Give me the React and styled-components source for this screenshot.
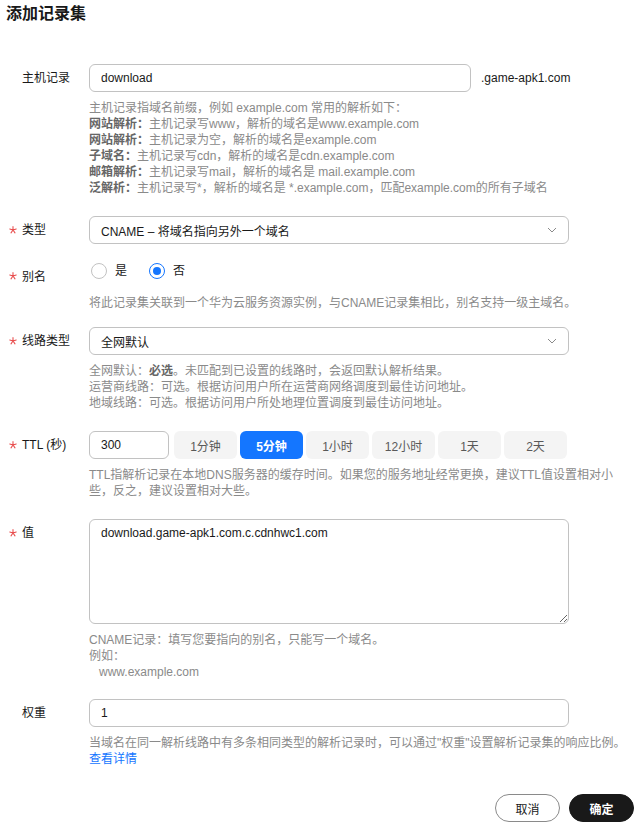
import React, { useState } from "react";
import styled, { createGlobalStyle } from "styled-components";

const Global = createGlobalStyle`
  html, body { margin: 0; padding: 0; background: #fff; }
  body {
    font-family: "Liberation Sans", "Noto Sans CJK SC", sans-serif;
    color: #191919;
    font-size: 12px;
  }
  * { box-sizing: border-box; }
`;

const Page = styled.div`
  width: 644px;
  height: 827px;
  padding: 4px 10px 0 0;
  display: flex;
  flex-direction: column;
`;

const Title = styled.h1`
  margin: 0 0 0 6px;
  font-size: 16px;
  line-height: 20px;
  font-weight: 700;
  color: #191919;
`;

const Form = styled.div`
  margin-top: 40px;
  display: flex;
  flex-direction: column;
`;

const Item = styled.div`
  display: flex;
  align-items: flex-start;
  margin-bottom: ${(p) => p.$mb ?? 20}px;
`;

const Label = styled.div`
  position: relative;
  width: 89px;
  flex: none;
  padding-left: 22px;
  padding-top: ${(p) => p.$pt ?? 0}px;
  font-size: 12px;
  line-height: 28px;
  color: #191919;
  white-space: nowrap;
`;

const Star = styled.svg`
  position: absolute;
  left: 9px;
  top: 50%;
  width: 8px;
  height: 8px;
  margin-top: -4px;
`;

const Control = styled.div`
  width: 480px;
  flex: none;
  display: flex;
  flex-direction: column;
`;

const Line = styled.div`
  display: flex;
  align-items: center;
  gap: ${(p) => p.$gap ?? 10}px;
  white-space: nowrap;
`;

const Input = styled.input`
  width: ${(p) => p.$w ?? 480}px;
  height: 28px;
  border: 1px solid #c2c2c2;
  border-radius: 6px;
  padding: 0 11px;
  font-family: inherit;
  font-size: 12px;
  color: #191919;
  outline: none;
  background: #fff;
  flex: none;
`;

const Suffix = styled.span`
  flex: none;
  white-space: nowrap;
  font-size: 12px;
  color: #191919;
`;

const SelectBox = styled.div`
  height: 28px;
  border: 1px solid #c2c2c2;
  border-radius: 6px;
  padding: 0 11px;
  display: flex;
  align-items: center;
  justify-content: space-between;
  font-size: 12px;
  color: #191919;
`;

const Help = styled.div`
  margin-top: ${(p) => p.$mt ?? 8}px;
  font-size: 12px;
  line-height: 16px;
  color: #8a8a8a;
  white-space: nowrap;
`;

const HelpLine = styled.div`
  padding-left: ${(p) => p.$indent ?? 0}px;
`;

const Strong = styled.b`
  font-weight: 700;
  color: #666;
`;

const Radios = styled.div`
  height: 28px;
  display: flex;
  align-items: flex-start;
  padding-top: 3px;
`;

const RadioOpt = styled.label`
  display: flex;
  align-items: center;
  gap: 8px;
  margin-right: ${(p) => p.$mr ?? 0}px;
  margin-left: 2px;
  line-height: 16px;
  font-size: 12px;
  color: #191919;
  cursor: pointer;
`;

const Circle = styled.span`
  width: 16px;
  height: 16px;
  border-radius: 50%;
  border: 1px solid ${(p) => (p.$on ? "#1476ff" : "#c2c2c2")};
  display: flex;
  align-items: center;
  justify-content: center;
  &::after {
    content: "";
    width: 8px;
    height: 8px;
    border-radius: 50%;
    background: #1476ff;
    display: ${(p) => (p.$on ? "block" : "none")};
  }
`;

const TtlButtons = styled.div`
  display: flex;
  gap: 3px;
  margin-left: 2px;
`;

const TtlBtn = styled.button`
  width: 63px;
  height: 28px;
  border: none;
  border-radius: 6px;
  background: ${(p) => (p.$active ? "#1476ff" : "#f4f4f4")};
  color: ${(p) => (p.$active ? "#fff" : "#595959")};
  font-family: inherit;
  font-size: 12px;
  font-weight: ${(p) => (p.$active ? 700 : 400)};
  padding: 0;
  cursor: pointer;
`;

const TextArea = styled.textarea`
  width: 480px;
  height: 105px;
  border: 1px solid #c2c2c2;
  border-radius: 6px;
  padding: 5px 11px;
  font-family: inherit;
  font-size: 12px;
  line-height: 16px;
  color: #191919;
  outline: none;
  resize: vertical;
  display: block;
`;

const Link = styled.a`
  color: #1476ff;
  text-decoration: none;
`;

const Footer = styled.div`
  margin-top: 27px;
  display: flex;
  justify-content: flex-end;
  gap: 9px;
`;

const Btn = styled.button`
  width: 65px;
  height: 28px;
  border-radius: 14px;
  border: 1px solid ${(p) => (p.$primary ? "#191919" : "#8a8a8a")};
  background: ${(p) => (p.$primary ? "#191919" : "#fff")};
  color: ${(p) => (p.$primary ? "#fff" : "#191919")};
  font-family: inherit;
  font-size: 12px;
  font-weight: ${(p) => (p.$primary ? 700 : 400)};
  padding: 0;
  cursor: pointer;
`;

const RequiredStar = () => (
  <Star viewBox="0 0 10 10">
    <path
      d="M5 0.8 L5 5 M5 5 L9 3.7 M5 5 L7.5 8.6 M5 5 L2.5 8.6 M5 5 L1 3.7"
      stroke="#e84a4a"
      strokeWidth="1.3"
      strokeLinecap="round"
      fill="none"
    />
  </Star>
);

const Chevron = () => (
  <svg width="10" height="6" viewBox="0 0 10 6">
    <path d="M1 1 L5 5 L9 1" stroke="#8a8a8a" strokeWidth="1" fill="none" />
  </svg>
);

const ttlOptions = ["1分钟", "5分钟", "1小时", "12小时", "1天", "2天"];

export default function App() {
  const [alias, setAlias] = useState(false);
  const [ttl, setTtl] = useState("5分钟");
  return (
    <Page>
      <Global />
      <Title>添加记录集</Title>
      <Form>
        <Item>
          <Label>主机记录</Label>
          <Control>
            <Line>
              <Input $w={382} defaultValue="download" />
              <Suffix>.game-apk1.com</Suffix>
            </Line>
            <Help>
              <HelpLine>主机记录指域名前缀，例如 example.com 常用的解析如下：</HelpLine>
              <HelpLine><Strong>网站解析：</Strong>主机记录写www，解析的域名是www.example.com</HelpLine>
              <HelpLine><Strong>网站解析：</Strong>主机记录为空，解析的域名是example.com</HelpLine>
              <HelpLine><Strong>子域名：</Strong>主机记录写cdn，解析的域名是cdn.example.com</HelpLine>
              <HelpLine><Strong>邮箱解析：</Strong>主机记录写mail，解析的域名是 mail.example.com</HelpLine>
              <HelpLine><Strong>泛解析：</Strong>主机记录写*，解析的域名是 *.example.com，匹配example.com的所有子域名</HelpLine>
            </Help>
          </Control>
        </Item>

        <Item $mb={16}>
          <Label><RequiredStar />类型</Label>
          <Control>
            <SelectBox>
              <span>CNAME – 将域名指向另外一个域名</span>
              <Chevron />
            </SelectBox>
          </Control>
        </Item>

        <Item $mb={16}>
          <Label $pt={3}><RequiredStar />别名</Label>
          <Control>
            <Radios>
              <RadioOpt $mr={20} onClick={() => setAlias(true)}>
                <Circle $on={alias} />是
              </RadioOpt>
              <RadioOpt onClick={() => setAlias(false)}>
                <Circle $on={!alias} />否
              </RadioOpt>
            </Radios>
            <Help $mt={7}>
              <HelpLine>将此记录集关联到一个华为云服务资源实例，与CNAME记录集相比，别名支持一级主域名。</HelpLine>
            </Help>
          </Control>
        </Item>

        <Item>
          <Label><RequiredStar />线路类型</Label>
          <Control>
            <SelectBox>
              <span>全网默认</span>
              <Chevron />
            </SelectBox>
            <Help>
              <HelpLine>全网默认：<Strong>必选</Strong>。未匹配到已设置的线路时，会返回默认解析结果。</HelpLine>
              <HelpLine>运营商线路：可选。根据访问用户所在运营商网络调度到最佳访问地址。</HelpLine>
              <HelpLine>地域线路：可选。根据访问用户所处地理位置调度到最佳访问地址。</HelpLine>
            </Help>
          </Control>
        </Item>

        <Item>
          <Label><RequiredStar />TTL (秒)</Label>
          <Control>
            <Line $gap={3}>
              <Input $w={80} defaultValue="300" />
              <TtlButtons>
                {ttlOptions.map((o) => (
                  <TtlBtn key={o} $active={ttl === o} onClick={() => setTtl(o)}>
                    {o}
                  </TtlBtn>
                ))}
              </TtlButtons>
            </Line>
            <Help>
              <HelpLine>TTL指解析记录在本地DNS服务器的缓存时间。如果您的服务地址经常更换，建议TTL值设置相对小</HelpLine>
              <HelpLine>些，反之，建议设置相对大些。</HelpLine>
            </Help>
          </Control>
        </Item>

        <Item $mb={19}>
          <Label><RequiredStar />值</Label>
          <Control>
            <TextArea defaultValue="download.game-apk1.com.c.cdnhwc1.com" />
            <Help>
              <HelpLine>CNAME记录：填写您要指向的别名，只能写一个域名。</HelpLine>
              <HelpLine>例如：</HelpLine>
              <HelpLine $indent={10}>www.example.com</HelpLine>
            </Help>
          </Control>
        </Item>

        <Item $mb={0}>
          <Label>权重</Label>
          <Control>
            <Input defaultValue="1" />
            <Help>
              <HelpLine>当域名在同一解析线路中有多条相同类型的解析记录时，可以通过"权重"设置解析记录集的响应比例。</HelpLine>
              <HelpLine><Link href="#">查看详情</Link></HelpLine>
            </Help>
          </Control>
        </Item>
      </Form>
      <Footer>
        <Btn>取消</Btn>
        <Btn $primary>确定</Btn>
      </Footer>
    </Page>
  );
}
